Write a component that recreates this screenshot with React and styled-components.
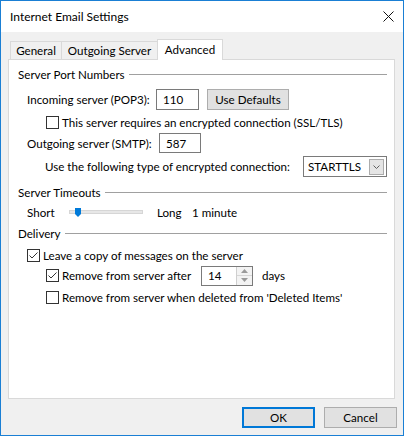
import React from "react";
import styled, { createGlobalStyle } from "styled-components";

const Global = createGlobalStyle`
  html, body { margin: 0; padding: 0; background: #ffffff; }
  body {
    font-family: Lato, "Segoe UI", "Liberation Sans", sans-serif;
    font-size: 11.6px;
    color: #000;
  }
  * { box-sizing: border-box; }
`;

const Window = styled.div`
  width: 404px;
  height: 436px;
  border: 1px solid #1a7fd4;
  background: #f0f0f0;
  display: flex;
  flex-direction: column;
`;

const TitleBar = styled.div`
  flex: none;
  height: 31px;
  background: #fff;
  display: flex;
  align-items: center;
  justify-content: space-between;
  padding: 0 9px 0 9px;
`;

const Title = styled.span`
  font-size: 12px;
  line-height: 1;
`;

const Body = styled.div`
  flex: 1;
  display: flex;
  flex-direction: column;
  padding: 7px 6px 0 7px;
`;

const TabStrip = styled.div`
  display: flex;
  align-items: flex-end;
  height: 20px;
  padding-left: 2px;
`;

const Tab = styled.div`
  width: ${(p) => p.$w}px;
  height: ${(p) => (p.$active ? 21 : 18)}px;
  margin-left: ${(p) => (p.$first ? 0 : -1)}px;
  margin-bottom: ${(p) => (p.$active ? -1 : 0)}px;
  border: 1px solid #d9d9d9;
  border-bottom: none;
  background: ${(p) => (p.$active ? "#fff" : "#f0f0f0")};
  display: flex;
  align-items: center;
  justify-content: center;
  padding-bottom: ${(p) => (p.$active ? 2 : 0)}px;
  position: relative;
  z-index: ${(p) => (p.$active ? 1 : 0)};
`;

const Panel = styled.div`
  flex: none;
  height: 340px;
  margin-right: 2px;
  background: #fff;
  border: 1px solid #d9d9d9;
  padding: 0 7px 0 9px;
  display: flex;
  flex-direction: column;
`;

const Row = styled.div`
  height: ${(p) => p.$h}px;
  padding-left: ${(p) => p.$indent || 0}px;
  display: flex;
  align-items: center;
  white-space: nowrap;
`;

const GroupHeader = styled(Row)`
  gap: 4px;
  &::after {
    content: "";
    flex: 1;
    height: 1px;
    background: #a0a0a0;
  }
`;

const Label = styled.span`
  display: inline-block;
  width: ${(p) => (p.$w ? `${p.$w}px` : "auto")};
  flex: none;
`;

const TextBox = styled.div`
  width: ${(p) => p.$w}px;
  height: ${(p) => p.$h}px;
  border: 1px solid #7a7a7a;
  background: #fff;
  display: flex;
  align-items: center;
  padding-left: 6px;
`;

const Button = styled.div`
  width: ${(p) => p.$w}px;
  height: 21px;
  margin-left: ${(p) => p.$ml || 0}px;
  background: #e1e1e1;
  border: ${(p) => (p.$default ? "2px solid #0078d7" : "1px solid #adadad")};
  display: flex;
  align-items: center;
  justify-content: center;
`;

const Select = styled.div`
  margin-left: auto;
  width: 84px;
  height: 21px;
  border: 1px solid #7a7a7a;
  background: #fff;
  display: flex;
  align-items: center;
  justify-content: space-between;
  padding: 0 2px 0 4px;
`;

const DropButton = styled.div`
  width: 15px;
  height: 16px;
  background: #e5e5e5;
  border: 1px solid #acacac;
  display: flex;
  align-items: center;
  justify-content: center;
`;

const Box = styled.span`
  flex: none;
  width: 13px;
  height: 13px;
  border: 1px solid #333;
  background: #fff;
  margin-right: 3px;
  display: inline-flex;
`;

const Track = styled.div`
  position: relative;
  width: 74px;
  height: 4px;
  background: #e7e7e7;
  border: 1px solid #d6d6d6;
  margin-right: 14px;
`;

const Thumb = styled.svg`
  position: absolute;
  left: 5px;
  top: -3px;
`;

const Spinner = styled.div`
  width: 52px;
  height: 20px;
  border: 1px solid #7a7a7a;
  background: #fff;
  display: flex;
  margin-right: 9px;
`;

const SpinText = styled.div`
  flex: 1;
  display: flex;
  align-items: center;
  padding-left: 6px;
`;

const SpinButtons = styled.div`
  width: 16px;
  display: flex;
  flex-direction: column;
  border-left: 1px solid #cfcfcf;
`;

const SpinHalf = styled.div`
  flex: 1;
  background: #f3f3f3;
  display: flex;
  align-items: center;
  justify-content: center;
  & + & {
    border-top: 1px solid #d6d6d6;
  }
`;

const Footer = styled.div`
  display: flex;
  justify-content: flex-end;
  gap: 9px;
  margin-top: 8px;
`;

function Check({ checked }) {
  return (
    <Box>
      {checked && (
        <svg width="11" height="11" viewBox="0 0 11 11">
          <path d="M1.5 5.5 L4 8 L9.5 2.5" fill="none" stroke="#333" strokeWidth="1" />
        </svg>
      )}
    </Box>
  );
}

export default function App() {
  return (
    <>
      <Global />
      <Window>
        <TitleBar>
          <Title>Internet Email Settings</Title>
          <svg width="11" height="11" viewBox="0 0 11 11">
            <path d="M0.5 0.5 L10.5 10.5 M10.5 0.5 L0.5 10.5" stroke="#111" strokeWidth="1" />
          </svg>
        </TitleBar>
        <Body>
          <TabStrip>
            <Tab $first $w={52}>General</Tab>
            <Tab $w={97}>Outgoing Server</Tab>
            <Tab $w={66} $active>Advanced</Tab>
          </TabStrip>
          <Panel>
            <GroupHeader $h={28}>Server Port Numbers</GroupHeader>
            <Row $h={23} $indent={9}>
              <Label $w={129}>Incoming server (POP3):</Label>
              <TextBox $w={43} $h={21}>110</TextBox>
              <Button $w={82} $ml={8}>Use Defaults</Button>
            </Row>
            <Row $h={22} $indent={28}>
              <Check />
              <span>This server requires an encrypted connection (SSL/TLS)</span>
            </Row>
            <Row $h={20} $indent={9}>
              <Label $w={132}>Outgoing server (SMTP):</Label>
              <TextBox $w={42} $h={20}>587</TextBox>
            </Row>
            <Row $h={27} $indent={27}>
              <span>Use the following type of encrypted connection:</span>
              <Select>
                <span>STARTTLS</span>
                <DropButton>
                  <svg width="7" height="4" viewBox="0 0 7 4">
                    <path d="M0.5 0.5 L3.5 3.5 L6.5 0.5" fill="none" stroke="#606060" strokeWidth="1" />
                  </svg>
                </DropButton>
              </Select>
            </Row>
            <GroupHeader $h={24}>Server Timeouts</GroupHeader>
            <Row $h={16} $indent={9}>
              <Label $w={42}>Short</Label>
              <Track>
                <Thumb width="6" height="9" viewBox="0 0 6 9">
                  <path d="M0 0 H6 V6 L3 9 L0 6 Z" fill="#007ad9" />
                </Thumb>
              </Track>
              <Label $w={35}>Long</Label>
              <span>1 minute</span>
            </Row>
            <GroupHeader $h={26}>Delivery</GroupHeader>
            <Row $h={18} $indent={9}>
              <Check checked />
              <span>Leave a copy of messages on the server</span>
            </Row>
            <Row $h={23} $indent={28}>
              <Check checked />
              <Label $w={139}>Remove from server after</Label>
              <Spinner>
                <SpinText>14</SpinText>
                <SpinButtons>
                  <SpinHalf>
                    <svg width="7" height="4" viewBox="0 0 7 4">
                      <path d="M0 4 L3.5 0 L7 4 Z" fill="#9a9a9a" />
                    </svg>
                  </SpinHalf>
                  <SpinHalf>
                    <svg width="7" height="4" viewBox="0 0 7 4">
                      <path d="M0 0 L3.5 4 L7 0 Z" fill="#9a9a9a" />
                    </svg>
                  </SpinHalf>
                </SpinButtons>
              </Spinner>
              <span>days</span>
            </Row>
            <Row $h={20} $indent={28}>
              <Check />
              <span>Remove from server when deleted from 'Deleted Items'</span>
            </Row>
          </Panel>
          <Footer>
            <Button $w={73} $default>OK</Button>
            <Button $w={73}>Cancel</Button>
          </Footer>
        </Body>
      </Window>
    </>
  );
}
